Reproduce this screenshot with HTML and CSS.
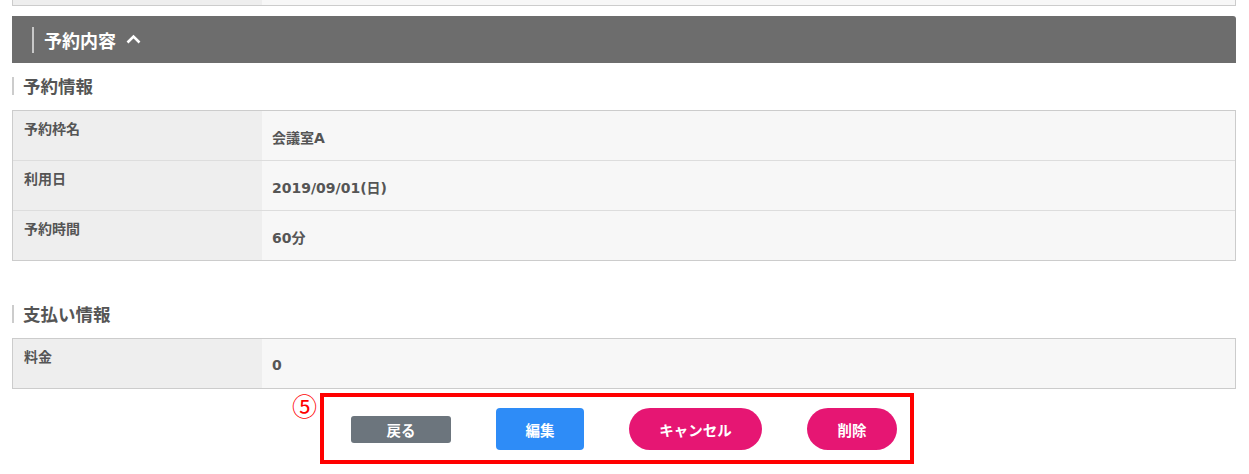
FILE: index.html
```html
<!DOCTYPE html>
<html lang="ja">
<head>
<meta charset="utf-8">
<link rel="stylesheet" href="styles.css">
</head>
<body>
<div class="page">
  <div class="prev-table">
    <div class="prev-label"></div>
    <div class="prev-value"></div>
  </div>

  <div class="section-bar">
    <span class="bar-line"></span>
    <span class="bar-title">予約内容</span>
    <svg class="chev" width="15" height="10" viewBox="0 0 15 10"><path d="M1.5 8.5 L7.5 2.5 L13.5 8.5" fill="none" stroke="#fff" stroke-width="2.6"/></svg>
  </div>

  <h3 class="sub-head">予約情報</h3>
  <div class="info-table">
    <div class="row">
      <div class="label">予約枠名</div>
      <div class="value">会議室A</div>
    </div>
    <div class="row">
      <div class="label">利用日</div>
      <div class="value">2019/09/01(日)</div>
    </div>
    <div class="row">
      <div class="label">予約時間</div>
      <div class="value">60分</div>
    </div>
  </div>

  <h3 class="sub-head second">支払い情報</h3>
  <div class="info-table">
    <div class="row">
      <div class="label">料金</div>
      <div class="value">0</div>
    </div>
  </div>

  <div class="actions-row">
    <span class="marker">⑤</span>
    <div class="annot-box">
      <button class="btn btn-back">戻る</button>
      <button class="btn btn-edit">編集</button>
      <button class="btn btn-pill btn-cancel">キャンセル</button>
      <button class="btn btn-pill btn-delete">削除</button>
    </div>
  </div>
</div>
</body>
</html>
```

FILE: styles.css
```css
* { box-sizing: border-box; }
html, body { margin: 0; padding: 0; background: #fff; }
body {
  font-family: "Noto Sans CJK JP", "Noto Sans", sans-serif;
  color: #555;
}
.page {
  width: 1224px;
  margin-left: 12px;
}
.prev-table {
  display: flex;
  height: 6px;
  border: 1px solid #ccc;
  border-top: none;
}
.prev-label { width: 249px; background: #eee; }
.prev-value { flex: 1; background: #f7f7f7; }

.section-bar {
  margin-top: 10px;
  height: 47px;
  background: #6d6d6d;
  border-top-right-radius: 3px;
  display: flex;
  align-items: center;
  padding-left: 20px;
}
.bar-line {
  width: 2px;
  height: 26px;
  background: #c8c8c8;
  margin-right: 10px;
}
.bar-title {
  color: #fff;
  font-weight: 700;
  font-size: 18px;
  line-height: 20px;
}
.chev { margin-left: 10px; margin-top: -1px; }

.sub-head {
  margin: 14px 0 0 0;
  height: 18px;
  border-left: 2px solid #ccc;
  padding-left: 9px;
  font-size: 17.5px;
  font-weight: 700;
  line-height: 18px;
  color: #555;
}
.sub-head.second { margin-top: 44px; }

.info-table {
  margin-top: 15px;
  border: 1px solid #ccc;
}
.row {
  display: flex;
  height: 50px;
  border-top: 1px solid #ddd;
}
.row:first-child { border-top: none; height: 49px; }
.label {
  width: 249px;
  background: #eee;
  font-size: 14px;
  font-weight: 700;
  padding: 8px 0 0 11px;
  line-height: 18px;
}
.value {
  flex: 1;
  background: #f7f7f7;
  font-family: "DejaVu Sans", "Noto Sans CJK JP", sans-serif;
  font-size: 14px;
  font-weight: 700;
  padding-left: 10px;
  display: flex;
  align-items: center;
  padding-top: 2px;
}

.actions-row {
  display: flex;
  align-items: flex-start;
  margin-top: 4px;
}
.marker {
  margin-left: 280px;
  width: 28px;
  color: #f00;
  font-size: 25px;
  line-height: 24px;
  margin-top: 0;
}
.annot-box {
  width: 594px;
  height: 71px;
  border: 4px solid #f00;
  display: flex;
  align-items: center;
  gap: 45px;
  padding-left: 27px;
  padding-top: 1px;
}
.btn {
  font-family: "Noto Sans CJK JP", "Noto Sans", sans-serif;
  font-weight: 700;
  font-size: 14.5px;
  color: #fff;
  border: none;
  padding: 0;
  display: flex;
  align-items: center;
  justify-content: center;
}
.btn-back {
  width: 100px;
  height: 27px;
  background: #6c757d;
  border-radius: 3px;
}
.btn-edit {
  width: 88px;
  height: 42px;
  background: #2e8cf7;
  border-radius: 4px;
}
.btn-pill {
  height: 42px;
  border-radius: 21px;
  background: #e61673;
}
.btn-cancel { width: 133px; }
.btn-delete { width: 90px; }
```
